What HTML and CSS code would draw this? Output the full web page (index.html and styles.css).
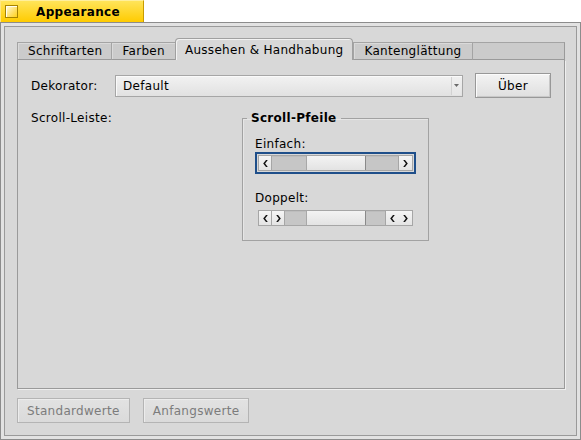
FILE: index.html
```html
<!DOCTYPE html>
<html>
<head>
<meta charset="utf-8">
<title>Appearance</title>
<link rel="stylesheet" href="styles.css">
</head>
<body>
<div class="window">
  <div class="titletab"><span class="zoombox"></span><span class="title">Appearance</span></div>
  <div class="frame">
    <div class="client">
      <div class="tabview">
        <div class="tabs">
          <div class="tab">Schriftarten</div>
          <div class="tab">Farben</div>
          <div class="tab active">Aussehen &amp; Handhabung</div>
          <div class="tab">Kantenglättung</div>
          <div class="tabfill"></div>
        </div>
        <div class="panel">
          <div class="row">
            <span class="label">Dekorator:</span>
            <div class="menufield">
              <span class="mf-text">Default</span>
              <span class="mf-arrow"><svg width="5" height="3" viewBox="0 0 5 3"><polygon points="0,0 5,0 2.5,3" fill="#6a6a6a"/></svg></span>
            </div>
            <button class="btn about">Über</button>
          </div>
          <div class="row2">
            <span class="label2">Scroll-Leiste:</span>
            <fieldset class="group">
              <legend>Scroll-Pfeile</legend>
              <div class="caption first">Einfach:</div>
              <div class="focus">
                <div class="sbar">
                  <span class="arr left"><svg width="5" height="7" viewBox="0 0 5 7"><polygon points="3,0 4.8,0 2.1,3.5 4.8,7 3,7 0.2,3.5" fill="#111"/></svg></span>
                  <span class="trough t1"></span>
                  <span class="thumb"></span>
                  <span class="trough fill"></span>
                  <span class="arr right last"><svg width="5" height="7" viewBox="0 0 5 7"><polygon points="2,0 0.2,0 2.9,3.5 0.2,7 2,7 4.8,3.5" fill="#111"/></svg></span>
                </div>
              </div>
              <div class="caption second">Doppelt:</div>
              <div class="sbar double">
                <span class="arr left"><svg width="5" height="7" viewBox="0 0 5 7"><polygon points="3,0 4.8,0 2.1,3.5 4.8,7 3,7 0.2,3.5" fill="#111"/></svg></span>
                <span class="arr left"><svg width="5" height="7" viewBox="0 0 5 7"><polygon points="2,0 0.2,0 2.9,3.5 0.2,7 2,7 4.8,3.5" fill="#111"/></svg></span>
                <span class="trough t2"></span>
                <span class="thumb"></span>
                <span class="trough fill"></span>
                <span class="arr right last"><svg width="5" height="7" viewBox="0 0 5 7"><polygon points="3,0 4.8,0 2.1,3.5 4.8,7 3,7 0.2,3.5" fill="#111"/></svg></span>
                <span class="arr right"><svg width="5" height="7" viewBox="0 0 5 7"><polygon points="2,0 0.2,0 2.9,3.5 0.2,7 2,7 4.8,3.5" fill="#111"/></svg></span>
              </div>
            </fieldset>
          </div>
        </div>
      </div>
      <div class="buttons">
        <button class="btn disabled" disabled>Standardwerte</button>
        <button class="btn disabled" disabled>Anfangswerte</button>
      </div>
    </div>
  </div>
</div>
</body>
</html>
```
FILE: styles.css
```css
* { box-sizing: border-box; }

body {
  margin: 0;
  background: #ffffff;
  font-family: "DejaVu Sans", "Noto Sans", sans-serif;
  font-size: 12px;
  letter-spacing: 0.3px;
  color: #000;
}

.window {
  width: 581px;
  height: 440px;
  display: flex;
  flex-direction: column;
}

/* title tab */
.titletab {
  width: 144px;
  height: 22px;
  flex: none;
  display: flex;
  align-items: center;
  gap: 18px;
  padding-left: 4px;
  background: linear-gradient(#ffe45a, #ffcb00);
  border-top: 1px solid #ffef9c;
  border-left: 1px solid #ffe680;
  border-right: 1px solid #c89c00;
}

.zoombox {
  width: 13px;
  height: 13px;
  border: 1px solid #a68300;
  background: linear-gradient(135deg, #fffbe2, #ffe066 60%, #ffd21a);
  box-shadow: inset 1px 1px 0 #fffef0;
}

.title {
  font-weight: bold;
  font-size: 12px;
  letter-spacing: 0.35px;
  line-height: 14px;
}

/* window frame */
.frame {
  flex: 1;
  display: flex;
  border: 1px solid #8c8c8c;
  background: #e2e2e2;
  padding: 3px;
}

.client {
  flex: 1;
  display: flex;
  flex-direction: column;
  border: 1px solid #9a9a9a;
  background: #d8d8d8;
  padding: 11px 11px 12px 12px;
}

/* tab view */
.tabview {
  flex: 1;
  display: flex;
  flex-direction: column;
}

.tabs {
  display: flex;
  align-items: flex-end;
  height: 22px;
  flex: none;
}

.tab {
  height: 18px;
  padding: 0 10px;
  background: #cbcbcb;
  border-top: 1px solid #a4a4a4;
  border-left: 1px solid #a4a4a4;
  border-bottom: 1px solid #9a9a9a;
  line-height: 16px;
  white-space: nowrap;
  box-shadow: inset 1px 1px 0 #dadada;
}

.tab:first-child {
  padding: 0 9px 0 10px;
}

.tab.active {
  height: 22px;
  padding: 3px 9px 0;
  background: #d8d8d8;
  border: 1px solid #a0a0a0;
  border-bottom: none;
  border-radius: 4px 4px 0 0;
  line-height: 16px;
  box-shadow: inset 1px 1px 0 #f2f2f2;
}

.tabfill {
  flex: 1;
  height: 18px;
  background: #cbcbcb;
  border-top: 1px solid #a4a4a4;
  border-left: 1px solid #a4a4a4;
  border-right: 1px solid #9a9a9a;
  border-bottom: 1px solid #9a9a9a;
}

.panel {
  flex: 1;
  border: 1px solid #9a9a9a;
  border-top: none;
  padding: 13px 12px 0 13px;
  box-shadow: 1px 1px 0 #efefef;
}

.row {
  display: flex;
  align-items: center;
}

.label {
  width: 84px;
  flex: none;
}

.menufield {
  width: 348px;
  height: 22px;
  flex: none;
  display: flex;
  align-items: center;
  padding-left: 7px;
  margin-right: 12px;
  border: 1px solid #a6a6a6;
  background: linear-gradient(#f2f2f2, #e1e1e1);
  box-shadow: inset 1px 1px 0 #fafafa;
}

.mf-arrow {
  margin-left: auto;
  width: 10px;
  height: 18px;
  margin-right: 1px;
  display: flex;
  align-items: center;
  justify-content: center;
  background: linear-gradient(#efefef, #e6e6e6);
  border-left: 1px solid #d2d2d2;
}

.btn {
  height: 25px;
  font-family: inherit;
  font-size: 12px;
  letter-spacing: 0.3px;
  color: #000;
  border: 1px solid #989898;
  background: linear-gradient(#f3f3f3, #dfdfdf);
  box-shadow: inset 1px 1px 0 #fbfbfb, inset -1px -1px 0 #c8c8c8;
  padding: 0 9px;
  margin: 0;
}

.btn.about {
  width: 76px;
  flex: none;
}

.btn.disabled {
  color: #7c7c7c;
  border-color: #b4b4b4;
  background: linear-gradient(#e2e2e2, #dadada);
  box-shadow: inset 1px 1px 0 #ececec;
}

.row2 {
  display: flex;
  align-items: flex-start;
  margin-top: 13px;
}

.label2 {
  width: 211px;
  flex: none;
  line-height: 15px;
}

.group {
  margin: 0;
  width: 187px;
  min-width: 0;
  border: 1px solid #a2a2a2;
  padding: 0 0 14px 12px;
  box-shadow: inset 1px 1px 0 #e6e6e6;
}

.group legend {
  font-weight: bold;
  padding: 0 4px;
  margin-left: -8px;
  line-height: 15px;
}

.caption {
  line-height: 15px;
}

.caption.first { margin-top: 11px; }
.caption.second { margin-top: 17px; }

.focus {
  width: 161px;
  border: 2px solid #1f4f8a;
  padding: 1px;
}

.sbar {
  display: flex;
  width: 155px;
  height: 16px;
  border: 1px solid #a6a6a6;
  background: #c6c6c6;
}

.sbar.double {
  margin-top: 4px;
  margin-left: 3px;
}

.arr {
  width: 13px;
  flex: none;
  display: flex;
  align-items: center;
  justify-content: center;
  background: linear-gradient(#f5f5f5, #e4e4e4);
  border-right: 1px solid #a6a6a6;
}

.arr.right {
  border-right: none;
}

.arr.last {
  width: 14px;
  border-left: 1px solid #a6a6a6;
}

.trough {
  background: #c6c6c6;
  box-shadow: inset 0 1px 0 #bdbdbd;
}

.trough.t1 { width: 34px; flex: none; }
.trough.t2 { width: 21px; flex: none; }
.trough.fill { flex: 1; }

.thumb {
  width: 60px;
  flex: none;
  background: linear-gradient(#f3f3f3, #e3e3e3);
  border-left: 1px solid #a8a8a8;
  border-right: 1px solid #8a8a8a;
}

.buttons {
  display: flex;
  gap: 13px;
  margin-top: 9px;
  flex: none;
}
```
